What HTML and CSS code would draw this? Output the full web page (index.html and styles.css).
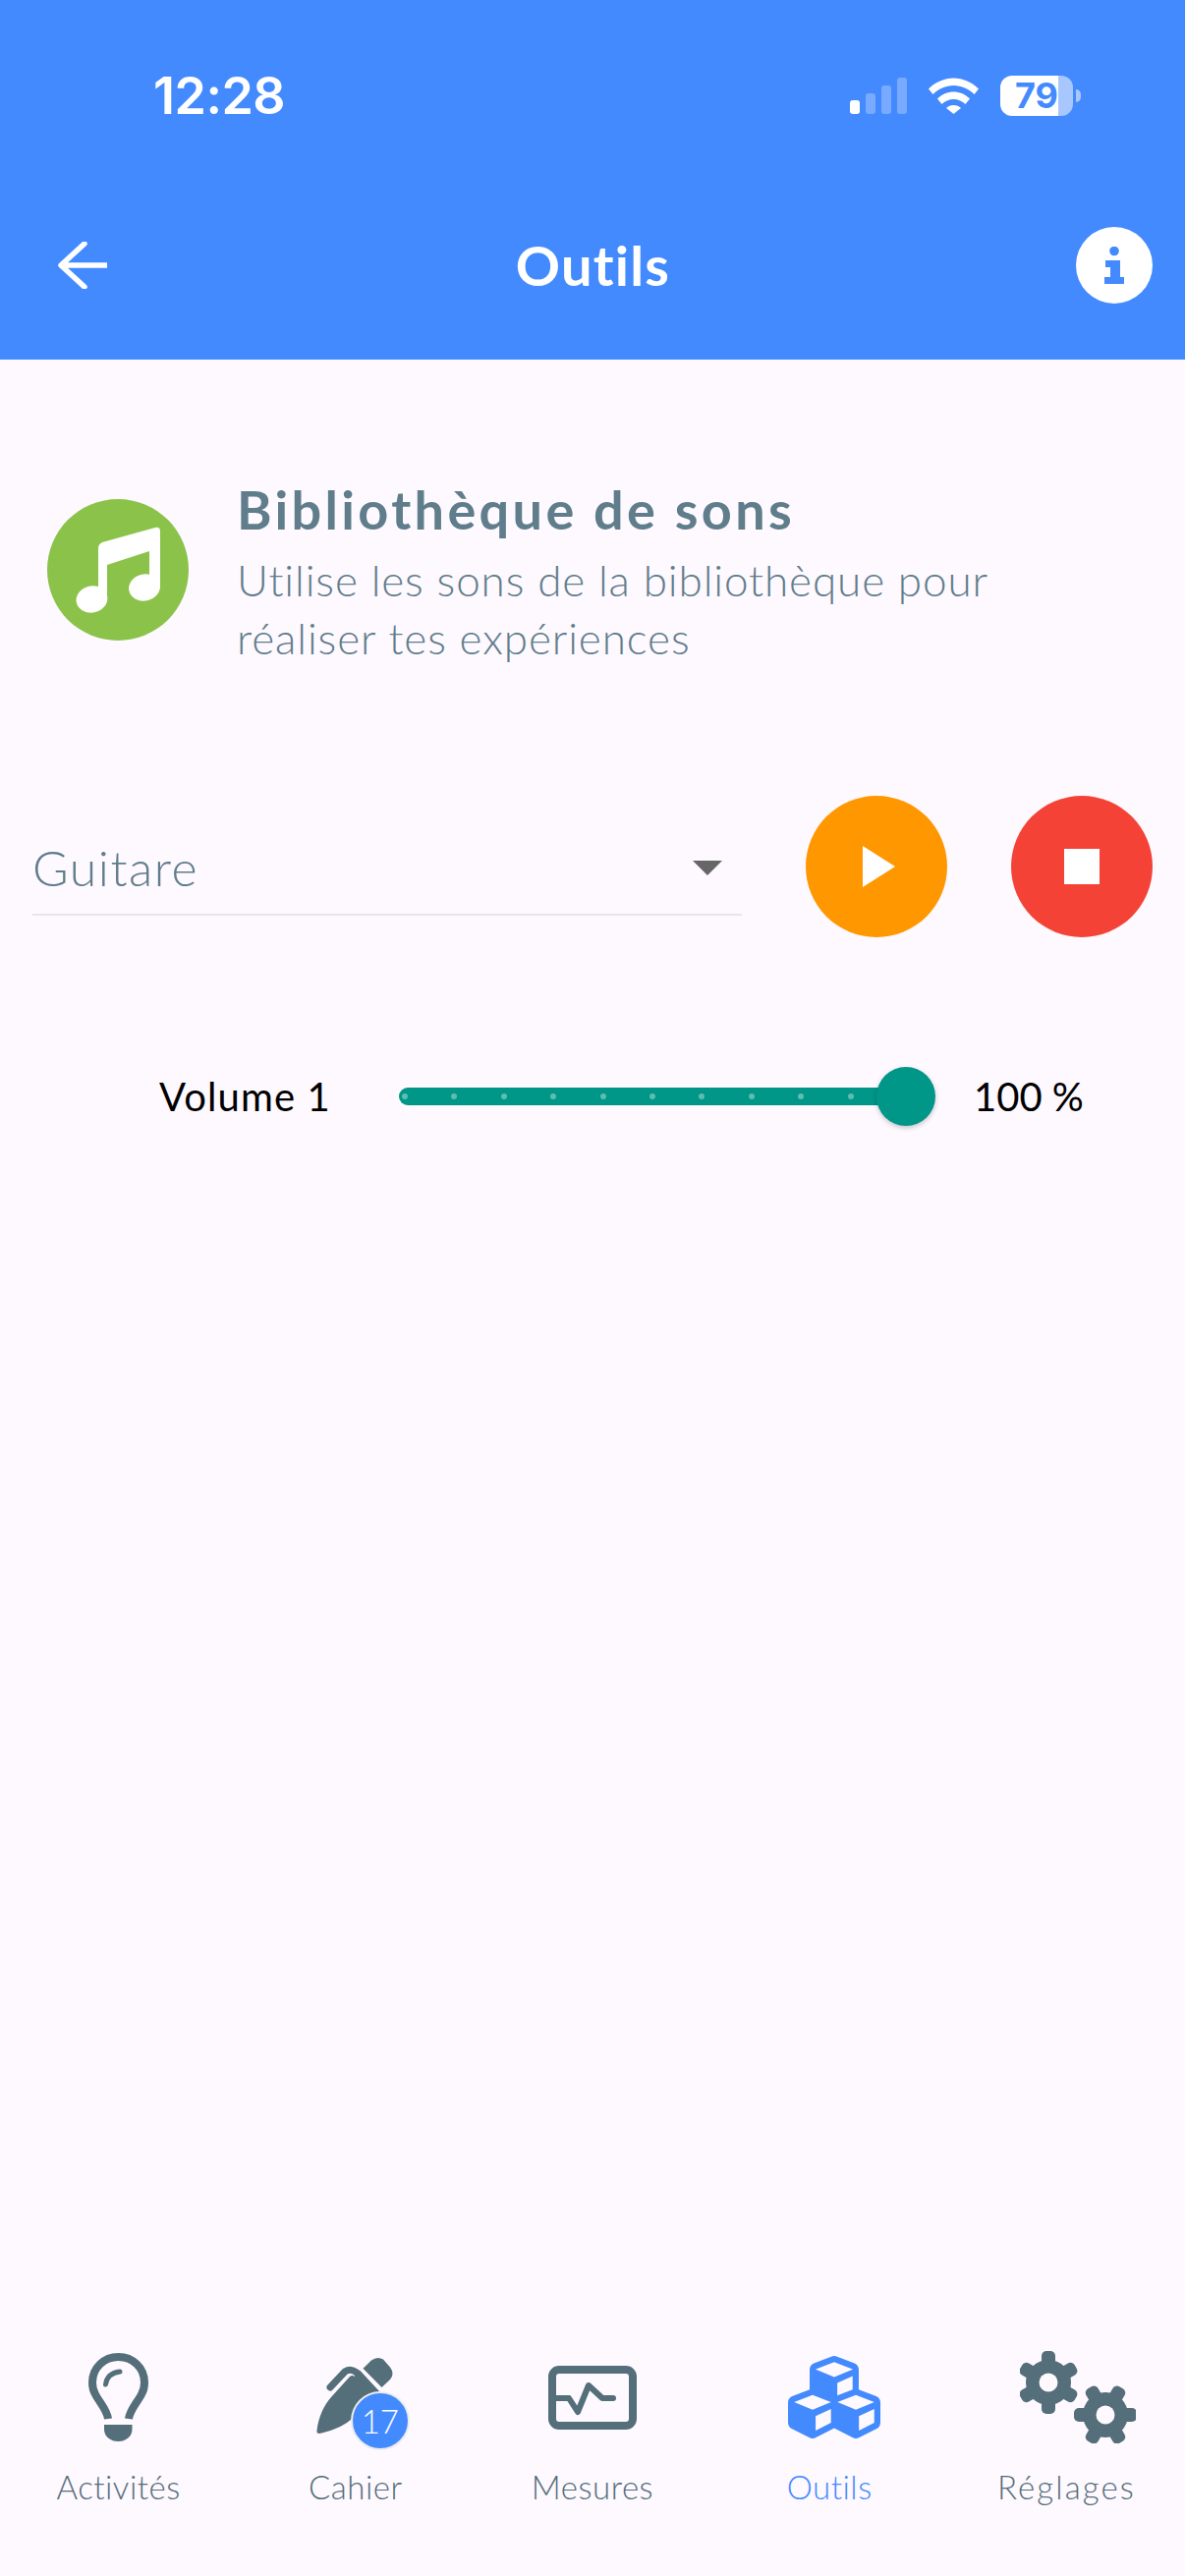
FILE: index.html
```html
<!DOCTYPE html>
<html lang="fr">
<head>
<meta charset="utf-8">
<title>Outils</title>
<link rel="stylesheet" href="styles.css">
</head>
<body>
<div class="app">
  <header class="header">
    <div class="status">
      <span class="time">12:28</span>
      <div class="status-icons">
        <div class="signal"><i class="b1"></i><i class="b2"></i><i class="b3"></i><i class="b4"></i></div>
        <svg class="wifi" viewBox="0 0 51 37"><path d="M0 11.5C7 4.5 16 .5 25.5.5S44 4.500 51 11.5l-4.500 5.500C41 11.500 33.500 8 25.500 8S10 11.500 4.500 17z"/><path d="M9 21.500C13.500 17 19.500 14.500 25.500 14.500S37.500 17 42 21.500l-4.500 5.500C34.500 24 30 22 25.500 22S16.500 24 13.500 27z"/><path d="M18 31c2-2 4.700-3 7.500-3s5.500 1 7.500 3l-7.500 6z"/></svg>
        <div class="battery"><div class="battery-body"><span class="battery-val">79</span></div><span class="battery-nub"></span></div>
      </div>
    </div>
    <div class="nav">
      <svg class="back" viewBox="0 0 50 48"><path d="M27 2 3 24l24 22M4 24h46"/></svg>
      <h1 class="nav-title">Outils</h1>
      <div class="info">
        <svg class="info-i" viewBox="0 0 20 38"><circle cx="10" cy="4.500" r="4.800"/><path d="M1 14h15v17h4v7H0v-7h6V21H1z"/></svg>
      </div>
    </div>
  </header>

  <main class="content">
    <section class="intro">
      <svg class="intro-icon" viewBox="0 0 144 144">
        <circle cx="72" cy="72" r="72" fill="#8bc34a"/>
        <path fill="#fff" d="M52 50q0-4 4-6l54-15q5-1 5 4v58H104V53L61 67v35H52z"/>
        <ellipse fill="#fff" cx="45.500" cy="102" rx="16" ry="13.500" transform="rotate(-12 45.500 102)"/>
        <ellipse fill="#fff" cx="99" cy="90" rx="16" ry="13.500" transform="rotate(-12 99 90)"/>
      </svg>
      <div class="intro-text">
        <h2 class="intro-title">Bibliothèque de sons</h2>
        <p class="intro-desc">Utilise les sons de la bibliothèque pour réaliser tes expériences</p>
      </div>
    </section>

    <section class="player">
      <div class="select">
        <span class="select-value">Guitare</span>
        <span class="select-arrow"></span>
      </div>
      <div class="round round-play"><span class="play-glyph"></span></div>
      <div class="round round-stop"><span class="stop-glyph"></span></div>
    </section>

    <section class="volume">
      <span class="vol-label">Volume 1</span>
      <div class="slider">
        <div class="track">
          <i></i><i></i><i></i><i></i><i></i><i></i><i></i><i></i><i></i><i></i>
        </div>
        <span class="thumb"></span>
      </div>
      <span class="vol-value">100 %</span>
    </section>
  </main>

  <nav class="tabs">
    <div class="tab">
      <div class="tab-icon">
        <svg class="ic-bulb" viewBox="0 0 61 90"><path class="ln" d="M20 67C19 58 11 50 7 42 4 37 4 33 4 30 4 15 16 4 30.500 4S57 15 57 30c0 3 0 7-3 12-4 8-12 16-13 25"/><path class="fl" d="M16 73h28.500v5a14.250 12 0 0 1-28.500 0z"/><path class="ln-thin" d="M17.500 32c1-7 5.500-12 14.500-13"/></svg>
      </div>
      <span class="tab-label">Activités</span>
    </div>
    <div class="tab">
      <div class="tab-icon">
        <svg class="ic-pen" viewBox="0 0 80 82"><path class="fl" d="M.5 75C2 62 7 50 15 41L34 20q2.500-2 5 0l1-8 5 2.500L64 35 40 60l-9 7C22 73 12 76 3 78q-3 0-2.500-3z"/><path class="ln-clip" d="M14 31 29 15q6-4 12 1l7 8"/><path class="fl" d="M47.500 11.700 56 3.500q6-4.500 12-1l7 8q5 6.500 0 12.500l-8.500 8z"/></svg>
        <span class="badge">17</span>
      </div>
      <span class="tab-label">Cahier</span>
    </div>
    <div class="tab">
      <div class="tab-icon">
        <svg class="ic-mon" viewBox="0 0 90 65"><rect class="ln" x="4" y="4" width="82" height="57" rx="7"/><path class="ln-pulse" d="M3 33h18l9 14 11-27 14 13h11"/></svg>
      </div>
      <span class="tab-label">Mesures</span>
    </div>
    <div class="tab tab-active">
      <div class="tab-icon">
        <svg class="ic-cubes" viewBox="0 32 512 448" preserveAspectRatio="none"><path d="M488.600 250.200L392 214V105.500c0-15-9.300-28.400-23.400-33.700l-100-37.500c-8.100-3.100-17.100-3.100-25.300 0l-100 37.500c-14.100 5.300-23.400 18.700-23.400 33.700V214l-96.600 36.200C9.300 255.500 0 268.900 0 283.900V394c0 13.600 7.700 26.100 19.900 32.200l100 50c10.100 5.100 22.100 5.100 32.200 0l103.900-52 103.900 52c10.100 5.100 22.100 5.100 32.200 0l100-50c12.200-6.100 19.900-18.600 19.900-32.200V283.900c0-15-9.300-28.400-23.400-33.700zM358 214.800l-85 31.900v-68.200l85-37v73.300zM154 104.100l102-38.200 102 38.200v.6l-102 41.400-102-41.400v-.6zm84 291.100l-85 42.500v-79.100l85-38.800v75.400zm0-112l-102 41.400-102-41.400v-.6l102-38.200 102 38.200v.6zm240 112l-85 42.500v-79.100l85-38.800v75.400zm0-112l-102 41.400-102-41.400v-.6l102-38.200 102 38.200v.6z"/></svg>
      </div>
      <span class="tab-label">Outils</span>
    </div>
    <div class="tab">
      <div class="tab-icon">
        <svg class="ic-gears" viewBox="0 0 118 94">
          <g transform="translate(29 32)">
            <g class="teeth"><rect x="-7" y="-32" width="14" height="64" rx="5"/><rect x="-7" y="-32" width="14" height="64" rx="5" transform="rotate(60)"/><rect x="-7" y="-32" width="14" height="64" rx="5" transform="rotate(120)"/></g>
            <circle class="gear-disc" r="23"/><circle class="gear-hole" r="9.500"/>
          </g>
          <g transform="translate(87 65)">
            <g class="teeth"><rect x="-7" y="-32" width="14" height="64" rx="5" transform="rotate(30)"/><rect x="-7" y="-32" width="14" height="64" rx="5" transform="rotate(90)"/><rect x="-7" y="-32" width="14" height="64" rx="5" transform="rotate(150)"/></g>
            <circle class="gear-disc" r="23"/><circle class="gear-hole" r="9.500"/>
          </g>
        </svg>
      </div>
      <span class="tab-label tab-label-wide">Réglages</span>
    </div>
  </nav>
</div>
</body>
</html>
```

FILE: styles.css
```css
* { box-sizing: border-box; margin: 0; padding: 0; }
html, body { width: 1206px; height: 2622px; }
body { background: #fef8ff; font-family: "Lato", "Noto Sans", sans-serif; overflow: hidden; }
.app { height: 2622px; display: flex; flex-direction: column; }

.header { height: 366px; background: #448aff; color: #fff; padding-top: 77px; display: flex; flex-direction: column; }
.status { height: 41px; display: flex; align-items: center; justify-content: space-between; padding: 0 106px 0 156px; }
.time { font-family: "Inter", sans-serif; font-weight: 600; font-size: 52px; line-height: 41px; letter-spacing: -.5px; }
.status-icons { display: flex; align-items: center; }
.signal { display: flex; align-items: flex-end; gap: 6px; height: 37px; margin-right: 22px; }
.signal i { display: block; width: 10px; border-radius: 3px; background: rgba(255,255,255,.28); }
.signal .b1 { height: 14px; background: #fff; }
.signal .b2 { height: 21px; }
.signal .b3 { height: 29px; }
.signal .b4 { height: 37px; }
.wifi { width: 51px; height: 37px; fill: #fff; margin-right: 22px; }
.battery { display: flex; align-items: center; }
.battery-body { width: 74px; height: 41px; border-radius: 12px; background: linear-gradient(90deg, #fff 59px, #a8c7ff 59px); display: flex; align-items: center; justify-content: flex-end; padding-right: 15px; }
.battery-val { font-family: "Inter", sans-serif; font-weight: 700; font-size: 36px; line-height: 41px; color: #448aff; }
.battery-nub { width: 5px; height: 13px; margin-left: 3px; background: #a8c7ff; border-radius: 0 6px 6px 0; }

.nav { display: flex; align-items: center; justify-content: space-between; padding: 0 33px 0 59px; margin-top: 113px; height: 78px; position: relative; }
.back { width: 50px; height: 48px; fill: none; stroke: #fff; stroke-width: 5.500; stroke-linecap: round; stroke-linejoin: round; }
.nav-title { flex: 1; text-align: center; font-size: 56px; font-weight: 700; line-height: 78px; letter-spacing: 1.2px; padding-left: 3px; }
.info { width: 78px; height: 78px; border-radius: 50%; background: #fff; display: flex; align-items: center; justify-content: center; }
.info-i { width: 20px; height: 38px; fill: #448aff; }

.content { flex: 1; display: flex; flex-direction: column; }
.intro { display: flex; padding: 130px 40px 0 48px; }
.intro-icon { width: 144px; height: 144px; margin-top: 12px; flex: none; }
.intro-text { margin-left: 49px; color: #607d8b; }
.intro-title { font-size: 54px; font-weight: 700; line-height: 60px; letter-spacing: 3.350px; margin-top: -7px; }
.intro-desc { font-size: 44px; font-weight: 300; line-height: 59px; width: 800px; margin-top: 12px; letter-spacing: .9px; }

.player { display: flex; align-items: center; padding: 0 33px 0 33px; margin-top: 131px; height: 144px; }
.select { width: 723px; height: 120px; padding-top: 24px; border-bottom: 2px solid #e9e5ea; display: flex; justify-content: space-between; align-items: center; align-self: flex-end; margin-bottom: 22px; }
.select-value { font-size: 50px; font-weight: 300; color: #607d8b; letter-spacing: 1.500px; line-height: 60px; }
.select-arrow { width: 0; height: 0; border-left: 15px solid transparent; border-right: 15px solid transparent; border-top: 15px solid #666; margin-right: 20px; }
.round { width: 144px; height: 144px; border-radius: 50%; display: flex; align-items: center; justify-content: center; flex: none; }
.round-play { background: #ff9800; margin-left: 65px; }
.round-stop { background: #f44336; margin-left: 65px; }
.play-glyph { width: 0; height: 0; border-top: 21px solid transparent; border-bottom: 21px solid transparent; border-left: 33px solid #fff; margin-left: 4px; }
.stop-glyph { width: 36px; height: 36px; background: #fff; }

.volume { display: flex; align-items: center; margin-top: 132px; height: 60px; padding-left: 162px; }
.vol-label, .vol-value { font-size: 40px; font-weight: 400; color: #000; line-height: 60px; }
.vol-label { width: 244px; letter-spacing: 1.100px; }
.slider { width: 546px; height: 60px; position: relative; display: flex; align-items: center; }
.track { width: 500px; height: 18px; border-radius: 9px; background: #009688; display: flex; align-items: center; justify-content: flex-start; gap: 44.400px; padding-left: 3px; }
.track i { display: block; width: 6px; height: 6px; border-radius: 50%; background: #5cbdb0; flex: none; }
.thumb { position: absolute; left: 486px; top: 0; width: 60px; height: 60px; border-radius: 50%; background: #009688; box-shadow: 0 2px 5px rgba(0,0,0,.22); }
.vol-value { margin-left: 39px; }

.tabs { display: grid; grid-template-columns: repeat(5, 1fr); height: 232px; flex: none; }
.tab { display: flex; flex-direction: column; align-items: center; color: #546e7a; }
.tab-active { color: #448aff; }
.tab-icon { height: 100px; display: flex; align-items: center; justify-content: center; position: relative; }
.tab-label { font-size: 33px; font-weight: 300; line-height: 44px; margin-top: 19px; letter-spacing: .5px; }
.tab-label-wide { letter-spacing: 2.100px; }
.fl { fill: #546e7a; }
.ln { fill: none; stroke: #546e7a; stroke-width: 8; }
.ln-thin { fill: none; stroke: #546e7a; stroke-width: 5; stroke-linecap: round; }
.ln-clip { fill: none; stroke: #546e7a; stroke-width: 7; stroke-linecap: round; }
.ln-pulse { fill: none; stroke: #546e7a; stroke-width: 6; stroke-linecap: round; stroke-linejoin: round; }
.ic-bulb { width: 61px; height: 90px; }
.ic-pen { width: 80px; height: 82px; }
.ic-mon { width: 90px; height: 65px; }
.ic-cubes { width: 94px; height: 84px; fill: #448aff; margin-left: 10px; }
.ic-gears { width: 118px; height: 94px; margin-left: 24px; }
.teeth rect { fill: #546e7a; }
.gear-disc { fill: #546e7a; }
.gear-hole { fill: #fef8ff; }
.badge { position: absolute; left: 35px; top: 44px; width: 60px; height: 60px; border-radius: 50%; background: #448aff; border: 2px solid #ececec; color: #fff; font-size: 33px; font-weight: 300; display: flex; align-items: center; justify-content: center; }
```
